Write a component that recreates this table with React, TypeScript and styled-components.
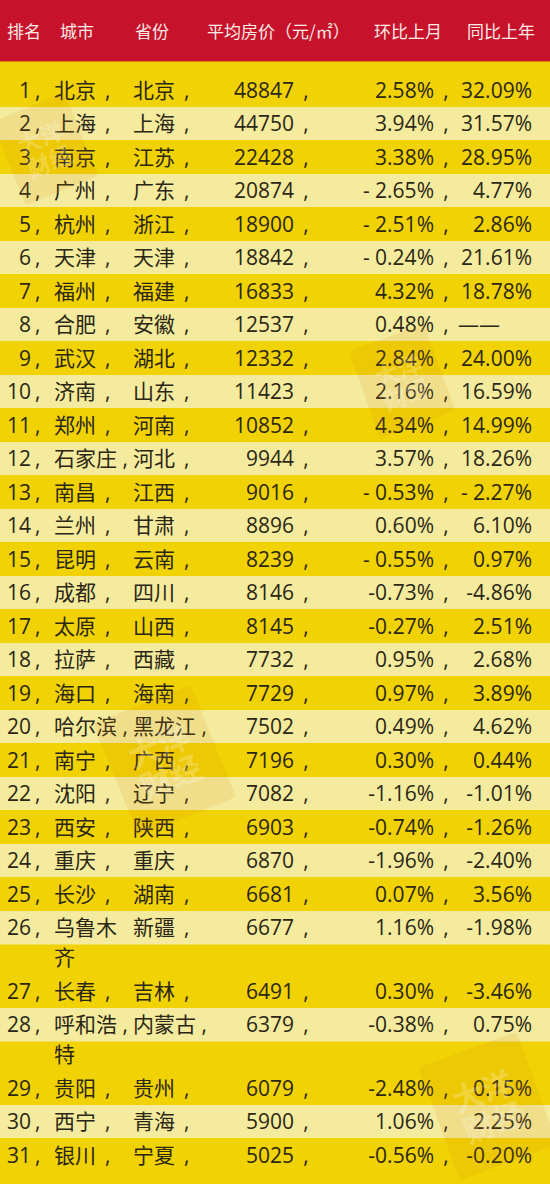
import React from 'react';
import styled, { createGlobalStyle } from 'styled-components';

const GlobalStyle = createGlobalStyle`
  html, body {
    margin: 0;
    padding: 0;
    background: #f1d204;
  }
  body {
    font-family: "Open Sans", "Noto Sans CJK SC", sans-serif;
  }
`

const Page = styled.div`
  position: relative;
  width: 550px;
  min-height: 1184px;
  overflow: hidden;
  background: #f1d204;
  color: #2b2714;
`

const Header = styled.div`
  display: grid;
  grid-template-columns: 53px 75px 72px 167px 93px 1fr;
  align-items: center;
  height: 61px;
  padding-left: 7px;
  background: #c6122b;
  box-shadow: 0 1px 0 #e27a14;
  color: #fbeae6;
  font-family: "Noto Sans CJK SC", sans-serif;
  font-size: 17px;
  white-space: nowrap;
`

const Body = styled.div`
  padding-top: 12px;
`

const Row = styled.div<{ $band: boolean }>`
  display: grid;
  grid-template-columns: 31px 23px 79px 82px 79px 24px 116px 24px 74px 1fr;
  padding: 1.75px 0;
  line-height: 30px;
  font-size: 21px;
  background: ${p => p.$band ? 'linear-gradient(#f4eb9e, #f4eb9e) top / 100% 33.5px no-repeat' : 'none'};
`

const Rank = styled.div`
  text-align: right;
`

const Sep = styled.div<{ $center?: boolean }>`
  text-align: ${p => p.$center ? 'center' : 'left'};
  padding-left: ${p => p.$center ? '0' : '4px'};
`

const Name = styled.div`
  text-align: left;
`

const Num = styled.div<{ $left?: boolean }>`
  text-align: ${p => p.$left ? 'left' : 'right'};
  white-space: nowrap;
`

const Stamp = styled.div<{ $x: number; $y: number; $size: number; $rot: number }>`
  position: absolute;
  left: ${p => p.$x}px;
  top: ${p => p.$y}px;
  width: ${p => p.$size}px;
  height: ${p => p.$size * 1.15}px;
  transform: rotate(${p => p.$rot}deg);
  background: rgba(214, 130, 10, 0.12);
  border-radius: 4px;
  display: flex;
  flex-direction: column;
  align-items: center;
  justify-content: center;
  color: rgba(255, 255, 255, 0.24);
  font-family: "Noto Sans CJK SC", sans-serif;
  font-weight: 700;
  font-size: ${p => p.$size * 0.3}px;
  line-height: 1.05;
  pointer-events: none;
`

type Item = [number, string, string, string, string, string];

// city / province strings keep the comma as printed in the table
const rows: Item[] = [
  [1, '北京\u00a0\u2009,', '北京\u00a0\u2009,', '48847', '2.58%', '32.09%'],
  [2, '上海\u00a0\u2009,', '上海\u00a0\u2009,', '44750', '3.94%', '31.57%'],
  [3, '南京\u00a0\u2009,', '江苏\u00a0\u2009,', '22428', '3.38%', '28.95%'],
  [4, '广州\u00a0\u2009,', '广东\u00a0\u2009,', '20874', '- 2.65%', '4.77%'],
  [5, '杭州\u00a0\u2009,', '浙江\u00a0\u2009,', '18900', '- 2.51%', '2.86%'],
  [6, '天津\u00a0\u2009,', '天津\u00a0\u2009,', '18842', '- 0.24%', '21.61%'],
  [7, '福州\u00a0\u2009,', '福建\u00a0\u2009,', '16833', '4.32%', '18.78%'],
  [8, '合肥\u00a0\u2009,', '安徽\u00a0\u2009,', '12537', '0.48%', '——'],
  [9, '武汉\u00a0\u2009,', '湖北\u00a0\u2009,', '12332', '2.84%', '24.00%'],
  [10, '济南\u00a0\u2009,', '山东\u00a0\u2009,', '11423', '2.16%', '16.59%'],
  [11, '郑州\u00a0\u2009,', '河南\u00a0\u2009,', '10852', '4.34%', '14.99%'],
  [12, '石家庄\u00a0,', '河北\u00a0\u2009,', '9944', '3.57%', '18.26%'],
  [13, '南昌\u00a0\u2009,', '江西\u00a0\u2009,', '9016', '- 0.53%', '- 2.27%'],
  [14, '兰州\u00a0\u2009,', '甘肃\u00a0\u2009,', '8896', '0.60%', '6.10%'],
  [15, '昆明\u00a0\u2009,', '云南\u00a0\u2009,', '8239', '- 0.55%', '0.97%'],
  [16, '成都\u00a0\u2009,', '四川\u00a0\u2009,', '8146', '-0.73%', '-4.86%'],
  [17, '太原\u00a0\u2009,', '山西\u00a0\u2009,', '8145', '-0.27%', '2.51%'],
  [18, '拉萨\u00a0\u2009,', '西藏\u00a0\u2009,', '7732', '0.95%', '2.68%'],
  [19, '海口\u00a0\u2009,', '海南\u00a0\u2009,', '7729', '0.97%', '3.89%'],
  [20, '哈尔滨\u00a0,', '黑龙江\u00a0,', '7502', '0.49%', '4.62%'],
  [21, '南宁\u00a0\u2009,', '广西\u00a0\u2009,', '7196', '0.30%', '0.44%'],
  [22, '沈阳\u00a0\u2009,', '辽宁\u00a0\u2009,', '7082', '-1.16%', '-1.01%'],
  [23, '西安\u00a0\u2009,', '陕西\u00a0\u2009,', '6903', '-0.74%', '-1.26%'],
  [24, '重庆\u00a0\u2009,', '重庆\u00a0\u2009,', '6870', '-1.96%', '-2.40%'],
  [25, '长沙\u00a0\u2009,', '湖南\u00a0\u2009,', '6681', '0.07%', '3.56%'],
  [26, '乌鲁木齐', '新疆\u00a0\u2009,', '6677', '1.16%', '-1.98%'],
  [27, '长春\u00a0\u2009,', '吉林\u00a0\u2009,', '6491', '0.30%', '-3.46%'],
  [28, '呼和浩\u00a0, 特', '内蒙古\u00a0,', '6379', '-0.38%', '0.75%'],
  [29, '贵阳\u00a0\u2009,', '贵州\u00a0\u2009,', '6079', '-2.48%', '0.15%'],
  [30, '西宁\u00a0\u2009,', '青海\u00a0\u2009,', '5900', '1.06%', '2.25%'],
  [31, '银川\u00a0\u2009,', '宁夏\u00a0\u2009,', '5025', '-0.56%', '-0.20%'],
];

const stamps = [
  { x: 6, y: 104, size: 78, rot: -22 },
  { x: 362, y: 335, size: 80, rot: -20 },
  { x: 112, y: 700, size: 105, rot: -22 },
  { x: 436, y: 1046, size: 104, rot: -20 },
];

export default function App() {
  return (
    <Page>
      <GlobalStyle />
      <Header>
        <div>排名</div>
        <div>城市</div>
        <div>省份</div>
        <div>平均房价（元/㎡）</div>
        <div>环比上月</div>
        <div>同比上年</div>
      </Header>
      <Body>
        {rows.map(([rank, city, prov, price, mom, yoy]) => (
          <Row key={rank} $band={rank % 2 === 0}>
            <Rank>{rank}</Rank>
            <Sep>,</Sep>
            <Name>{city}</Name>
            <Name>{prov}</Name>
            <Num>{price}</Num>
            <Sep $center>,</Sep>
            <Num>{mom}</Num>
            <Sep $center>,</Sep>
            <Num $left={yoy === '——'}>{yoy}</Num>
          </Row>
        ))}
      </Body>
      {stamps.map((s, i) => (
        <Stamp key={i} $x={s.x} $y={s.y} $size={s.size} $rot={s.rot}>
          <span>大洋</span>
          <span>财经</span>
        </Stamp>
      ))}
    </Page>
  );
}
